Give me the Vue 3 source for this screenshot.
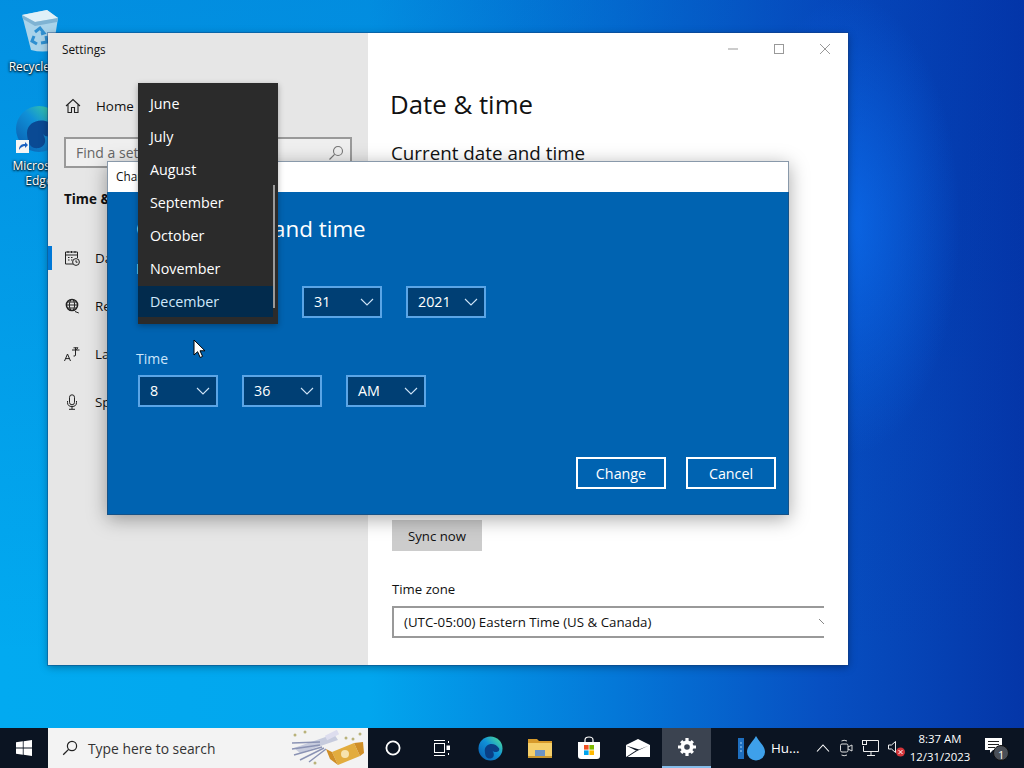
<script setup>
const months = ['June', 'July', 'August', 'September', 'October', 'November', 'December']
const nav = [
  { label: 'Date & time', icon: 'cal' },
  { label: 'Region', icon: 'globe' },
  { label: 'Language', icon: 'lang' },
  { label: 'Speech', icon: 'mic' }
]
const dateRow = [
  { value: 'December', key: 'm', wide: true },
  { value: '31', key: 'd' },
  { value: '2021', key: 'y' }
]
const timeRow = [
  { value: '8', key: 'h' },
  { value: '36', key: 'min' },
  { value: 'AM', key: 'ap' }
]
</script>

<template>
  <div class="screen">
    <div class="desktop">
      <div class="shortcut bin">
        <svg width="42" height="44" viewBox="0 0 42 44">
          <path d="M3 6 L28 1 L39 9 L34 41 Q24 44 12 41 Z" fill="#a9d3ea" />
          <path d="M3 6 L28 1 L39 9 L16 13 Z" fill="#dff0f8" />
          <path d="M3 6 L16 13 L39 9 L38 13 L16 17 L4 10 Z" fill="#7fb3d3" />
          <path d="M16 23 L21 19 L25 24 L22 25 M27 27 L28 33 L22 34 M15 27 L13 32 L18 35" fill="none" stroke="#2f8fd0" stroke-width="3" />
        </svg>
        <span>Recycle Bin</span>
      </div>
      <div class="shortcut edge">
        <svg width="48" height="48" viewBox="0 0 48 48">
          <defs>
            <linearGradient id="edgeA" x1="0.1" y1="0.9" x2="0.9" y2="0.1">
              <stop offset="0" stop-color="#0a63b4" />
              <stop offset="0.55" stop-color="#1091d8" />
              <stop offset="1" stop-color="#3fd0a0" />
            </linearGradient>
          </defs>
          <circle cx="24" cy="24" r="23" fill="url(#edgeA)" />
          <path d="M12 28 C12 15 32 10 41 24 C43 31 31 34 28 29 C36 42 20 47 15 40 C13 36 12 32 12 28 Z" fill="#0a4a94" />
          <rect x="1" y="35" width="13" height="13" fill="#f5f5f5" />
          <path d="M4 45 C4 40 7 39 10 39 L10 37 L13 40 L10 43 L10 41 C8 41 6 42 4 45 Z" fill="#1a60c0" />
        </svg>
        <span>Microsoft Edge</span>
      </div>

      <section class="settings">
        <aside class="side">
          <div class="app-title">Settings</div>
          <div class="home">
            <svg class="glyph" width="16" height="16" viewBox="0 0 16 16">
              <path d="M1 8 L8 1.5 L15 8 M3 6.5 V14.5 H6.5 V9.5 H9.5 V14.5 H13 V6.5" fill="none" stroke="#222" stroke-width="1.1" />
            </svg>
            <span>Home</span>
          </div>
          <div class="find">
            <span>Find a setting</span>
            <svg width="16" height="16" viewBox="0 0 16 16">
              <circle cx="10" cy="6" r="4.5" fill="none" stroke="#777" stroke-width="1.1" />
              <path d="M6.6 9.4 L1.5 14.5" stroke="#777" stroke-width="1.2" />
            </svg>
          </div>
          <div class="group">Time &amp; Language</div>
          <ul class="nav">
            <li v-for="(n, i) in nav" :key="n.icon" :class="{ on: i === 0 }">
              <svg v-if="n.icon === 'cal'" class="glyph" width="16" height="16" viewBox="0 0 16 16" fill="none" stroke="#222">
                <path d="M9 14 H1.5 V2 H13.5 V8 M1.5 5 H13.5 M4 1 V3 M7.5 1 V3 M11 1 V3" />
                <path d="M4 7.5 H5.5 M7 7.5 H8.5 M4 10 H5.5 M7 10 H8.5" />
                <circle cx="12" cy="12" r="3.4" />
                <path d="M12 10.3 V12.2 H13.5" />
              </svg>
              <svg v-else-if="n.icon === 'globe'" class="glyph" width="16" height="16" viewBox="0 0 16 16" fill="none" stroke="#222">
                <circle cx="8" cy="7" r="5.6" stroke-width="1.5" />
                <ellipse cx="8" cy="7" rx="2.6" ry="5.6" />
                <path d="M2.4 7 H13.6 M3.2 4 H12.8 M3.2 10 H12.8" />
                <path d="M11 13.5 L14.8 15" />
              </svg>
              <svg v-else-if="n.icon === 'lang'" class="glyph" width="16" height="16" viewBox="0 0 16 16" fill="none" stroke="#222" stroke-width="1">
                <path d="M0.5 15 L3.5 8 L6.5 15 M1.7 12.6 H5.3" />
                <path d="M8 4 H15.5 M11.5 1.5 V9 Q11.5 10.5 9.5 10 M9.5 1.8 H14 L11.8 4" />
              </svg>
              <svg v-else class="glyph" width="16" height="16" viewBox="0 0 16 16" fill="none" stroke="#222">
                <rect x="5.5" y="0.8" width="5" height="10" rx="2.5" />
                <path d="M3.5 7 V8.5 Q3.5 12.5 8 12.5 Q12.5 12.5 12.5 8.5 V7 M8 12.5 V15 M5 15.3 H11" />
              </svg>
              <span>{{ n.label }}</span>
            </li>
          </ul>
        </aside>

        <main class="pane">
          <div class="controls">
            <svg width="12" height="12" viewBox="0 0 12 12"><path d="M1 6 H11" stroke="#999" /></svg>
            <svg width="12" height="12" viewBox="0 0 12 12"><rect x="1.5" y="1.5" width="9" height="9" fill="none" stroke="#999" /></svg>
            <svg width="12" height="12" viewBox="0 0 12 12"><path d="M1 1 L11 11 M11 1 L1 11" stroke="#999" /></svg>
          </div>
          <h1>Date &amp; time</h1>
          <h2>Current date and time</h2>
          <button class="sync">Sync now</button>
          <label class="tz-label">Time zone</label>
          <div class="tz">
            <span>(UTC-05:00) Eastern Time (US &amp; Canada)</span>
            <svg width="14" height="8" viewBox="0 0 14 8"><path d="M1 1 L7 7 L13 1" fill="none" stroke="#888" /></svg>
          </div>
        </main>
      </section>

      <section class="dialog">
        <div class="dlg-title">Change date and time</div>
        <div class="dlg-body">
          <h3>Change date and time</h3>
          <div class="field-label date-label">Date</div>
          <div class="picks">
            <div v-for="p in dateRow" :key="p.key" class="pick" :class="{ wide: p.wide }">
              <span>{{ p.value }}</span>
              <svg width="14" height="8" viewBox="0 0 14 8"><path d="M1 1 L7 7 L13 1" fill="none" stroke="#cfe4f7" stroke-width="1.1" /></svg>
            </div>
          </div>
          <div class="field-label time-label">Time</div>
          <div class="picks">
            <div v-for="p in timeRow" :key="p.key" class="pick">
              <span>{{ p.value }}</span>
              <svg width="14" height="8" viewBox="0 0 14 8"><path d="M1 1 L7 7 L13 1" fill="none" stroke="#cfe4f7" stroke-width="1.1" /></svg>
            </div>
          </div>
          <div class="actions">
            <button>Change</button>
            <button>Cancel</button>
          </div>
        </div>
      </section>

      <ul class="menu">
        <li v-for="m in months" :key="m" :class="{ sel: m === 'December' }">{{ m }}</li>
        <i class="thumb"></i>
      </ul>

      <svg class="cursor" width="14" height="20" viewBox="0 0 14 20">
        <path d="M1 1 V16 L4.6 12.7 L7.2 18.5 L9.6 17.4 L7 11.8 H12 Z" fill="#fff" stroke="#000" stroke-width="1" />
      </svg>
    </div>

    <footer class="taskbar">
      <div class="start">
        <svg width="16" height="16" viewBox="0 0 16 16" fill="#fff">
          <path d="M0 2.3 L6.8 1.3 V7.5 H0 Z M7.6 1.2 L16 0 V7.5 H7.6 Z M0 8.4 H6.8 V14.7 L0 13.7 Z M7.6 8.4 H16 V16 L7.6 14.8 Z" />
        </svg>
      </div>
      <div class="search">
        <svg width="16" height="16" viewBox="0 0 16 16">
          <circle cx="10" cy="6" r="4.6" fill="none" stroke="#222" stroke-width="1.2" />
          <path d="M6.6 9.4 L1.2 14.8" stroke="#222" stroke-width="1.3" />
        </svg>
        <span>Type here to search</span>
        <svg class="doodle" width="76" height="38" viewBox="0 0 76 38">
          <path d="M4 19 L44 5 L48 11 L10 24 Z" fill="#c6cbdd" />
          <path d="M2 14 L30 13 M2 20 L30 16 M4 26 L32 18 M10 31 L34 19 M19 33 L36 20" stroke="#8b93b4" stroke-width="1.5" fill="none" />
          <path d="M36 9 L48 3" stroke="#dde" stroke-width="5" />
          <path d="M42 23 L64 14 L70 27 L48 36 Z" fill="#e2ac3e" />
          <path d="M42 23 L36 20 L40 30 L48 36 Z M64 14 L73 13 L74 24 L70 27 Z" fill="#cf8e26" />
          <circle cx="55" cy="25" r="4" fill="#f7e3ad" />
          <g fill="#b9b27a"><circle cx="5" cy="6" r="1.5" /><circle cx="70" cy="5" r="1.5" /><circle cx="15" cy="3" r="1.5" /><circle cx="56" cy="9" r="1.5" /><circle cx="25" cy="34" r="1.5" /><circle cx="63" cy="10" r="1.5" /></g>
        </svg>
      </div>
      <div class="tb-icon">
        <svg width="16" height="16" viewBox="0 0 16 16"><circle cx="8" cy="8" r="6.6" fill="none" stroke="#fff" stroke-width="1.8" /></svg>
      </div>
      <div class="tb-icon">
        <svg width="16" height="16" viewBox="0 0 16 16" fill="none" stroke="#fff">
          <path d="M0 .5 H11 M0 15.5 H11" />
          <rect x=".5" y="3.5" width="10" height="9" />
          <path d="M14.5 1 V3 M14.5 13 V15" />
          <rect x="13" y="6" width="3" height="3.5" fill="#fff" />
        </svg>
      </div>
      <div class="tb-icon">
        <svg width="25" height="25" viewBox="0 0 26 26">
          <defs>
            <linearGradient id="edgeB" x1="0.1" y1="0.9" x2="0.9" y2="0.1">
              <stop offset="0" stop-color="#0a63b4" />
              <stop offset="0.55" stop-color="#1091d8" />
              <stop offset="1" stop-color="#46d5a0" />
            </linearGradient>
          </defs>
          <circle cx="13" cy="13" r="12.5" fill="url(#edgeB)" />
          <path d="M7 15 C7 8 17 5 22 13 C23 17 17 18 15 15 C20 23 11 26 8 21 C7.5 19 7 17 7 15 Z" fill="#0a3f86" />
        </svg>
      </div>
      <div class="tb-icon">
        <svg width="24" height="20" viewBox="0 0 24 20">
          <path d="M0 1 H9 L11 3 H24 V6 H0 Z" fill="#d79a2b" />
          <rect y="5" width="24" height="15" fill="#f5cf6a" />
          <rect x="7" y="12" width="10" height="6" fill="#6c94c4" />
          <rect y="18" width="24" height="2" fill="#c9962e" />
        </svg>
      </div>
      <div class="tb-icon">
        <svg width="24" height="24" viewBox="0 0 24 24">
          <path d="M8 7 V4 Q8 1 12 1 Q16 1 16 4 V7" fill="none" stroke="#fff" stroke-width="1.2" />
          <path d="M1 6 H23 V20 Q23 23 20 23 H4 Q1 23 1 20 Z" fill="#fff" />
          <rect x="7" y="9" width="4.6" height="4.6" fill="#f25022" />
          <rect x="12.4" y="9" width="4.6" height="4.6" fill="#7fba00" />
          <rect x="7" y="14.4" width="4.6" height="4.6" fill="#00a4ef" />
          <rect x="12.4" y="14.4" width="4.6" height="4.6" fill="#ffb900" />
        </svg>
      </div>
      <div class="tb-icon">
        <svg width="24" height="18" viewBox="0 0 24 18">
          <path d="M0 6 L12 0 L24 6 V18 H0 Z" fill="#fff" />
          <path d="M0 6.5 L11 12 L23 6.5 L13 10.5 Z" fill="#0b1422" />
          <path d="M0 18 L10 11.5 L11 12 L1.5 18 Z" fill="#0b1422" />
        </svg>
      </div>
      <div class="tb-icon active">
        <svg width="18" height="18" viewBox="0 0 18 18">
          <path d="M9 2.5 A6.5 6.5 0 1 0 9 15.5 A6.5 6.5 0 1 0 9 2.5 Z M9 6.2 A2.8 2.8 0 1 1 9 11.8 A2.8 2.8 0 1 1 9 6.2 Z" fill="#fff" fill-rule="evenodd" />
          <path d="M7.4 0 H10.6 V4 H7.4 Z M7.4 14 H10.6 V18 H7.4 Z M0 7.4 H4 V10.6 H0 Z M14 7.4 H18 V10.6 H14 Z M2 4.3 L4.3 2 L6.8 4.5 L4.5 6.8 Z M11.2 13.5 L13.5 11.2 L16 13.7 L13.7 16 Z M13.7 2 L16 4.3 L13.5 6.8 L11.2 4.5 Z M4.5 11.2 L6.8 13.5 L4.3 16 L2 13.7 Z" fill="#fff" />
        </svg>
      </div>
      <div class="hu">
        <svg width="27" height="26" viewBox="0 0 27 26">
          <rect x="0" y="3" width="6" height="21" fill="#1e6fc0" />
          <path d="M2 8 H4 M2 12 H4 M2 16 H4" stroke="#9fd0f5" />
          <path d="M18 1 C22 8 27 11 27 17 A9 8.5 0 0 1 9 17 C9 11 14 8 18 1 Z" fill="#3ea0ea" />
        </svg>
        <span>Hu...</span>
      </div>
      <div class="tray">
        <svg width="14" height="8" viewBox="0 0 14 8"><path d="M1 7.5 L7 1 L13 7.5" fill="none" stroke="#fff" stroke-width="1.1" /></svg>
        <svg width="14" height="20" viewBox="0 0 14 20" fill="none" stroke="#ddd">
          <rect x="1.5" y="6" width="7.5" height="8" rx="1.5" />
          <path d="M9 9 L13 7 V13 L9 11 M2.5 3 Q5 1.5 8 3 M2.5 17 Q5 18.5 8 17" />
        </svg>
        <svg width="17" height="16" viewBox="0 0 17 16" fill="none" stroke="#eee">
          <path d="M4.5 .5 H16.5 V11.5 H1.5 V6 M9 11.5 V15 M5 15.5 H13" />
          <rect x=".5" y=".5" width="4" height="4" />
        </svg>
        <svg width="18" height="18" viewBox="0 0 18 18">
          <path d="M0.5 6 H3.5 L7.5 2.5 V13.5 L3.5 10 H0.5 Z" fill="none" stroke="#eee" />
          <circle cx="12.5" cy="13" r="4.5" fill="#d5353a" />
          <path d="M10.5 11 L14.5 15 M14.5 11 L10.5 15" stroke="#fff" />
        </svg>
      </div>
      <div class="clock">
        <span>8:37 AM</span>
        <span>12/31/2023</span>
      </div>
      <div class="notify">
        <svg width="24" height="26" viewBox="0 0 24 26">
          <path d="M0 3 H17 V15 H8 L5 18 V15 H0 Z" fill="#fff" />
          <path d="M3 6.5 H14 M3 9.5 H14 M3 12.5 H10" stroke="#222" />
          <circle cx="16" cy="18" r="7.5" fill="#4a4f57" stroke="#111" />
        </svg>
        <b>1</b>
      </div>
    </footer>
  </div>
</template>

<style scoped>
.screen {
  width: 1024px;
  height: 768px;
  overflow: hidden;
  display: flex;
  flex-direction: column;
  font-family: "Open Sans", "Noto Sans", sans-serif;
  color: #111;
}
.desktop {
  position: relative;
  flex: 1;
  overflow: hidden;
  background:
    radial-gradient(ellipse 110px 230px at 850px 225px, rgba(12, 110, 240, .75) 0%, rgba(12, 110, 240, 0) 100%),
    linear-gradient(180deg, rgba(0, 50, 170, .22) 0%, rgba(0, 50, 170, 0) 90%),
    linear-gradient(90deg, #02aaf0 0%, #02a6ee 36%, #0478d8 60%, #0750c2 80%, #0436a8 100%);
}
.shortcut {
  position: absolute;
  width: 76px;
  display: flex;
  flex-direction: column;
  align-items: center;
  color: #fff;
  font-size: 12px;
  line-height: 15px;
  text-align: center;
  text-shadow: 0 0 3px #000, 0 1px 2px #000;
}
.bin { left: 2px; top: 9px; gap: 6px; }
.edge { left: 1px; top: 105px; gap: 5px; }

.settings {
  position: absolute;
  left: 48px;
  top: 33px;
  width: 800px;
  height: 632px;
  display: grid;
  grid-template-columns: 320px 480px;
  background: #fff;
  box-shadow: 0 0 0 1px rgba(20, 60, 120, .4), 0 2px 8px rgba(0, 0, 0, .35);
}
.side {
  background: #e6e6e6;
  display: flex;
  flex-direction: column;
}
.app-title { font-size: 11.8px; line-height: 16px; padding: 8px 0 0 14px; }
.home {
  display: flex;
  align-items: center;
  gap: 15px;
  margin-top: 39px;
  padding-left: 17px;
  font-size: 13.4px;
  height: 20px;
}
.find {
  margin: 21px 16px 0;
  height: 31px;
  box-sizing: border-box;
  border: 2px solid #999;
  display: flex;
  align-items: center;
  justify-content: space-between;
  padding: 0 6px 0 10px;
  color: #666;
  font-size: 14px;
  background: #efefef;
}
.group { font-weight: 700; font-size: 13.4px; margin: 21px 0 0 16px; line-height: 20px; }
.nav { list-style: none; margin: 25px 0 0; padding: 0; }
.nav li {
  height: 48px;
  display: flex;
  align-items: center;
  gap: 15px;
  padding-left: 16px;
  font-size: 13.4px;
  position: relative;
}
.nav li.on::before {
  content: "";
  position: absolute;
  left: 0;
  top: 12px;
  width: 4px;
  height: 24px;
  background: #0078d7;
}
.glyph { flex: none; }

.pane {
  padding-left: 22px;
  display: flex;
  flex-direction: column;
  align-items: flex-start;
  min-width: 0;
}
.controls {
  align-self: flex-end;
  display: flex;
  gap: 34px;
  padding: 10px 17px 0 0;
}
h1 { font-size: 25.8px; font-weight: 400; line-height: 36px; margin: 31px 0 0; }
h2 { font-size: 18.8px; font-weight: 400; line-height: 26px; margin: 18px 0 0 1px; }
.sync {
  margin: 354px 0 0 2px;
  width: 90px;
  height: 31px;
  border: 0;
  background: #ccc;
  font: inherit;
  font-size: 13.2px;
  color: #111;
}
.tz-label { font-size: 13.2px; line-height: 20px; margin: 28px 0 0 2px; }
.tz {
  margin: 7px 0 0 2px;
  width: 432px;
  height: 32px;
  box-sizing: border-box;
  border: 2px solid #999;
  border-right: 0;
  display: flex;
  align-items: center;
  justify-content: space-between;
  padding-left: 10px;
  font-size: 13.3px;
  overflow: hidden;
}
.tz svg { flex: none; margin-right: -8px; }

.dialog {
  position: absolute;
  left: 107px;
  top: 161px;
  width: 682px;
  height: 354px;
  display: flex;
  flex-direction: column;
  box-shadow: 0 4px 18px rgba(0, 0, 0, .35);
  outline: 1px solid rgba(40, 70, 100, .55);
  outline-offset: -1px;
}
.dlg-title {
  height: 31px;
  background: #fff;
  font-size: 11.8px;
  line-height: 31px;
  padding-left: 9px;
  flex: none;
}
.dlg-body {
  flex: 1;
  background: #0063b1;
  color: #fff;
  padding: 0 13px 26px 29px;
  display: flex;
  flex-direction: column;
}
h3 { font-size: 22.4px; font-weight: 400; line-height: 32px; margin: 21px 0 0; }
.field-label { font-size: 14px; line-height: 20px; color: #cde6fa; }
.date-label { margin-top: 14px; }
.time-label { margin-top: 31px; }
.picks { display: flex; gap: 24px; margin: 6px 0 0 2px; }
.date-label + .picks { margin-top: 7px; }
.pick {
  width: 80px;
  height: 32px;
  box-sizing: border-box;
  border: 2px solid #5ba5e6;
  background: #003f74;
  display: flex;
  align-items: center;
  justify-content: space-between;
  padding: 0 6px 0 10px;
  font-size: 14.3px;
}
.pick span { margin-top: -2px; }
.pick.wide { width: 140px; }
.actions { margin-top: auto; display: flex; justify-content: flex-end; gap: 20px; }
.actions button {
  width: 90px;
  height: 32px;
  background: transparent;
  border: 2px solid #fff;
  color: #fff;
  font: inherit;
  font-size: 14.3px;
}

.menu {
  position: absolute;
  left: 138px;
  top: 83px;
  width: 140px;
  height: 241px;
  box-sizing: border-box;
  margin: 0;
  padding: 5px 0 0;
  list-style: none;
  background: #2b2b2b;
  color: #fff;
  box-shadow: 0 2px 6px rgba(0, 0, 0, .3);
}
.menu li { height: 33px; line-height: 32px; padding-left: 12px; font-size: 14.3px; }
.menu li.sel {
  background: #022b4d;
  color: #cfe8fb;
  height: 31px;
  margin-right: 5px;
}
.thumb {
  position: absolute;
  right: 3px;
  top: 102px;
  width: 2px;
  height: 123px;
  background: #999;
}
.cursor { position: absolute; left: 193px; top: 339px; }

.taskbar {
  height: 40px;
  flex: none;
  background: #0b1422;
  display: flex;
  align-items: stretch;
  color: #fff;
}
.taskbar > * { flex: none; }
.start { width: 48px; display: flex; align-items: center; justify-content: center; }
.search {
  width: 320px;
  background: #f3f3f3;
  color: #333;
  display: flex;
  align-items: center;
  font-size: 13.85px;
  position: relative;
  padding-left: 14px;
  gap: 10px;
  box-sizing: border-box;
}
.doodle { position: absolute; right: 2px; top: 1px; }
.tb-icon {
  width: 49px;
  display: flex;
  align-items: center;
  justify-content: center;
  box-sizing: border-box;
}
.tb-icon.active { background: #3b4350; border-bottom: 2px solid #86bdea; }
.hu {
  display: flex;
  align-items: center;
  gap: 6px;
  font-size: 13.4px;
  margin-left: 27px;
  width: 62px;
}
.tray { display: flex; align-items: center; gap: 9px; margin-left: 16px; }
.clock {
  width: 68px;
  display: flex;
  flex-direction: column;
  align-items: center;
  justify-content: center;
  font-size: 11.4px;
  line-height: 18px;
  white-space: nowrap;
}
.notify {
  position: relative;
  margin-left: 11px;
  display: flex;
  align-items: center;
}
.notify b {
  position: absolute;
  left: 13px;
  top: 19px;
  width: 6px;
  font-size: 11px;
  font-weight: 400;
  text-align: center;
}
</style>

<style>
html, body { margin: 0; background: #0b1422; }
button { padding: 0; }
</style>
